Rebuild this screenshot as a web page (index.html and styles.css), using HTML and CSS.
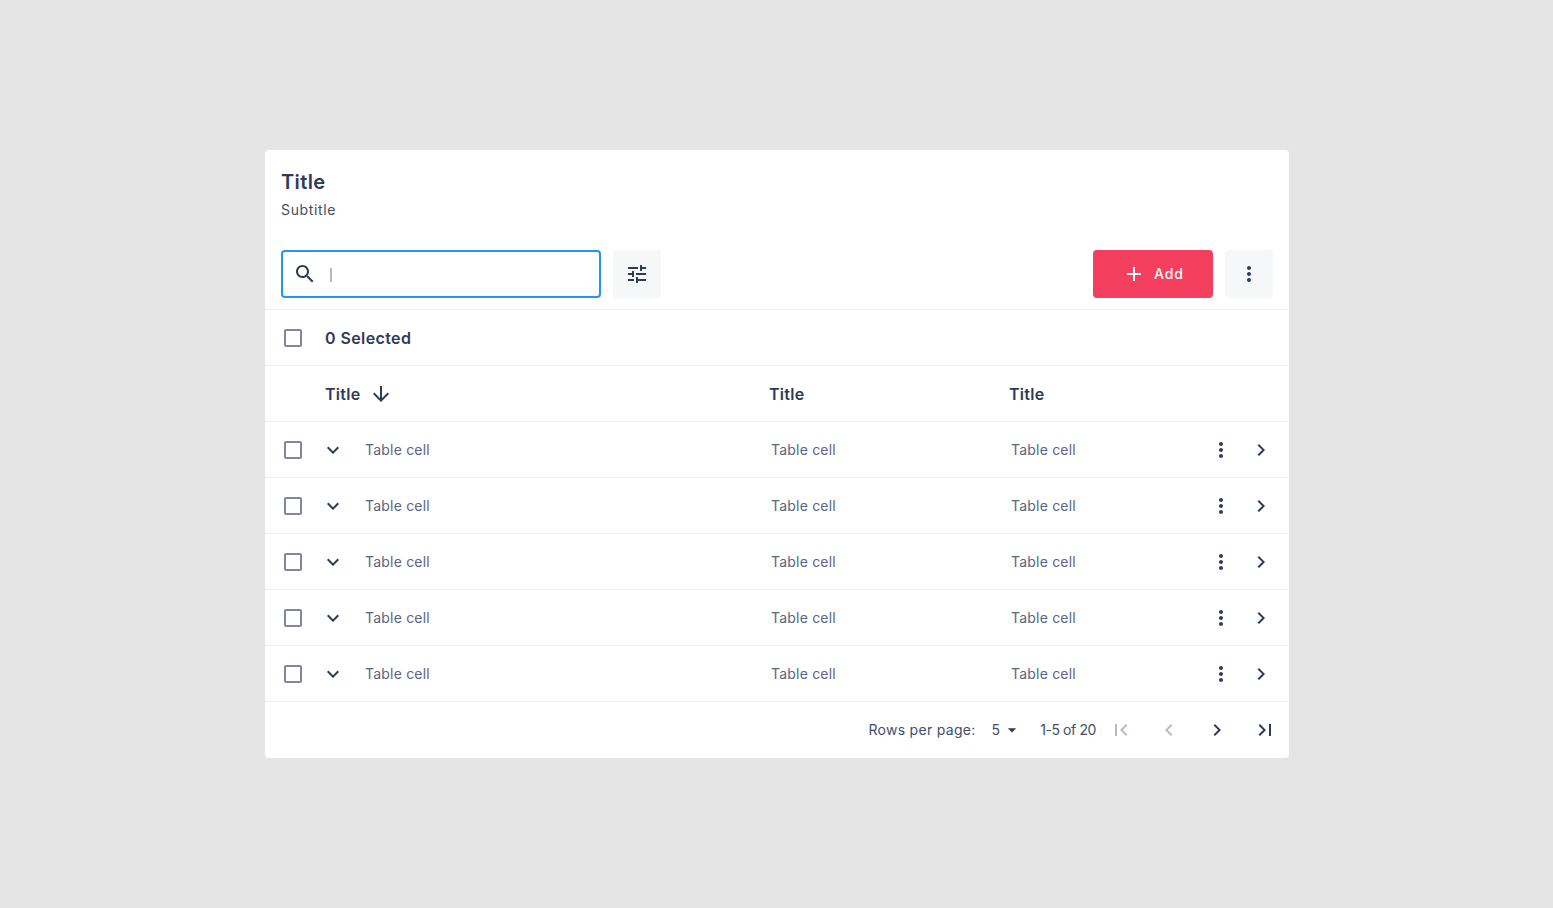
FILE: index.html

```html
<!DOCTYPE html>
<html lang="en">
<head>
    <meta charset="UTF-8">
    <title>Table</title>
    <meta name="viewport" content="width=device-width, initial-scale=1.0">
    <link rel="stylesheet" href="styles.css">
</head>
<body>
    <svg class="sprite" aria-hidden="true">
        <symbol id="i-search" viewBox="0 0 24 24"><path d="M15.5 14h-.79l-.28-.27C15.41 12.59 16 11.11 16 9.5 16 5.91 13.09 3 9.5 3S3 5.91 3 9.5 5.91 16 9.5 16c1.61 0 3.09-.59 4.23-1.57l.27.28v.79l5 4.99L20.49 19l-4.99-5zm-6 0C7.01 14 5 11.99 5 9.5S7.01 5 9.5 5 14 7.01 14 9.5 11.99 14 9.5 14z"/></symbol>
        <symbol id="i-tune" viewBox="0 0 24 24"><path d="M3 17v2h6v-2H3zM3 5v2h10V5H3zm10 16v-2h8v-2h-8v-2h-2v6h2zM7 9v2H3v2h4v2h2V9H7zm14 4v-2H11v2h10zm-6-4h2V7h4V5h-4V3h-2v6z"/></symbol>
        <symbol id="i-more" viewBox="0 0 24 24"><path d="M12 8c1.1 0 2-.9 2-2s-.9-2-2-2-2 .9-2 2 .9 2 2 2zm0 2c-1.1 0-2 .9-2 2s.9 2 2 2 2-.9 2-2-.9-2-2-2zm0 6c-1.1 0-2 .9-2 2s.9 2 2 2 2-.9 2-2-.9-2-2-2z"/></symbol>
        <symbol id="i-add" viewBox="0 0 24 24"><path d="M19 13h-6v6h-2v-6H5v-2h6V5h2v6h6v2z"/></symbol>
        <symbol id="i-down" viewBox="0 0 24 24"><path d="M20 12l-1.41-1.41L13 16.17V4h-2v12.17l-5.58-5.59L4 12l8 8 8-8z"/></symbol>
        <symbol id="i-expand" viewBox="0 0 24 24"><path d="M16.59 8.59L12 13.17 7.41 8.59 6 10l6 6 6-6z"/></symbol>
        <symbol id="i-next" viewBox="0 0 24 24"><path d="M10 6L8.59 7.41 13.17 12l-4.58 4.59L10 18l6-6z"/></symbol>
        <symbol id="i-prev" viewBox="0 0 24 24"><path d="M15.41 7.41L14 6l-6 6 6 6 1.41-1.41L10.83 12z"/></symbol>
        <symbol id="i-first" viewBox="0 0 24 24"><path d="M18.41 16.59L13.82 12l4.59-4.59L17 6l-6 6 6 6zM6 6h2v12H6z"/></symbol>
        <symbol id="i-last" viewBox="0 0 24 24"><path d="M5.59 7.41L10.18 12l-4.59 4.59L7 18l6-6-6-6zM16 6h2v12h-2z"/></symbol>
        <symbol id="i-drop" viewBox="0 0 24 24"><path d="M7 10l5 5 5-5z"/></symbol>
    </svg>

    <div class="card">
        <div class="heading">
            <h2>Title</h2>
            <p>Subtitle</p>
        </div>

        <div class="toolbar">
            <div class="search">
                <svg class="icon"><use href="#i-search"/></svg>
                <span class="caret"></span>
            </div>
            <button class="btn-square"><svg class="icon"><use href="#i-tune"/></svg></button>
            <button class="btn-add"><svg class="icon"><use href="#i-add"/></svg>Add</button>
            <button class="btn-square"><svg class="icon"><use href="#i-more"/></svg></button>
        </div>

        <div class="row-selected">
            <span class="check"></span>
            <strong>0 Selected</strong>
        </div>

        <div class="row-head">
            <div class="head-sort">Title <svg class="icon"><use href="#i-down"/></svg></div>
            <div>Title</div>
            <div>Title</div>
        </div>

        <div class="row">
            <span class="check"></span>
            <svg class="icon"><use href="#i-expand"/></svg>
            <span class="cell">Table cell</span>
            <span class="cell">Table cell</span>
            <span class="cell">Table cell</span>
            <div class="actions">
                <svg class="icon"><use href="#i-more"/></svg>
                <svg class="icon"><use href="#i-next"/></svg>
            </div>
        </div>
        <div class="row">
            <span class="check"></span>
            <svg class="icon"><use href="#i-expand"/></svg>
            <span class="cell">Table cell</span>
            <span class="cell">Table cell</span>
            <span class="cell">Table cell</span>
            <div class="actions">
                <svg class="icon"><use href="#i-more"/></svg>
                <svg class="icon"><use href="#i-next"/></svg>
            </div>
        </div>
        <div class="row">
            <span class="check"></span>
            <svg class="icon"><use href="#i-expand"/></svg>
            <span class="cell">Table cell</span>
            <span class="cell">Table cell</span>
            <span class="cell">Table cell</span>
            <div class="actions">
                <svg class="icon"><use href="#i-more"/></svg>
                <svg class="icon"><use href="#i-next"/></svg>
            </div>
        </div>
        <div class="row">
            <span class="check"></span>
            <svg class="icon"><use href="#i-expand"/></svg>
            <span class="cell">Table cell</span>
            <span class="cell">Table cell</span>
            <span class="cell">Table cell</span>
            <div class="actions">
                <svg class="icon"><use href="#i-more"/></svg>
                <svg class="icon"><use href="#i-next"/></svg>
            </div>
        </div>
        <div class="row">
            <span class="check"></span>
            <svg class="icon"><use href="#i-expand"/></svg>
            <span class="cell">Table cell</span>
            <span class="cell">Table cell</span>
            <span class="cell">Table cell</span>
            <div class="actions">
                <svg class="icon"><use href="#i-more"/></svg>
                <svg class="icon"><use href="#i-next"/></svg>
            </div>
        </div>

        <div class="pager">
            <span class="rows-label">Rows per page:</span>
            <span class="rows-select">5 <svg class="icon"><use href="#i-drop"/></svg></span>
            <span class="range">1-5 of 20</span>
            <div class="pager-nav">
                <svg class="icon off"><use href="#i-first"/></svg>
                <svg class="icon off"><use href="#i-prev"/></svg>
                <svg class="icon"><use href="#i-next"/></svg>
                <svg class="icon"><use href="#i-last"/></svg>
            </div>
        </div>
    </div>
</body>
</html>
```

FILE: styles.css

```css
* {
    box-sizing: border-box;
}
body {
    margin: 0;
    min-height: 908px;
    padding: 150px 264px 150px 265px;
    background-color: #e5e5e5;
    font-family: Inter, "Open Sans", sans-serif;
    color: #2e3a59;
}
.sprite {
    display: none;
}
.icon {
    width: 24px;
    height: 24px;
    fill: #2e3a59;
    flex: none;
}
.card {
    width: 1024px;
    background-color: #fff;
    border-radius: 4px;
}
.heading {
    height: 100px;
    padding: 20px 16px 0;
}
.heading h2 {
    margin: 0;
    font-size: 20px;
    line-height: 24px;
    font-weight: 600;
    letter-spacing: 0.4px;
}
.heading p {
    margin: 8px 0 0;
    font-size: 14px;
    line-height: 16px;
    letter-spacing: 0.65px;
    color: #444e6b;
}
.toolbar {
    display: flex;
    align-items: center;
    height: 60px;
    padding: 0 16px 12px;
    border-bottom: 1px solid #edeff2;
}
.search {
    display: flex;
    align-items: center;
    gap: 13px;
    width: 320px;
    height: 48px;
    padding: 0 10px;
    margin-right: 12px;
    border: 2px solid #2196f3;
    border-radius: 4px;
}
.caret {
    width: 2px;
    height: 14px;
    margin-top: 2px;
    background-color: #b4b9c6;
}
.btn-square {
    display: flex;
    align-items: center;
    justify-content: center;
    width: 48px;
    height: 48px;
    padding: 0;
    border: 0;
    border-radius: 4px;
    background-color: #f6f7f9;
}
.btn-add {
    display: flex;
    align-items: center;
    justify-content: center;
    gap: 8px;
    width: 120px;
    height: 48px;
    margin-left: auto;
    margin-right: 12px;
    padding: 0;
    border: 0;
    border-radius: 4px;
    background-color: #f43f5e;
    color: #fff;
    font-family: inherit;
    font-size: 14px;
    font-weight: 500;
    letter-spacing: 0.9px;
}
.btn-add .icon {
    fill: #fff;
}
.check {
    display: block;
    width: 18px;
    height: 18px;
    margin-left: 19px;
    border: 2px solid #7f879f;
    border-radius: 2px;
}
.row-selected {
    display: grid;
    grid-template-columns: 60px 1fr;
    align-items: center;
    height: 56px;
    border-bottom: 1px solid #edeff2;
    font-size: 16px;
}
.row-selected strong {
    font-weight: 600;
    letter-spacing: 0.4px;
}
.row-head {
    display: grid;
    grid-template-columns: 444px 240px 1fr;
    align-items: center;
    height: 56px;
    padding-left: 60px;
    border-bottom: 1px solid #edeff2;
    font-size: 16px;
    font-weight: 600;
    letter-spacing: 0.3px;
}
.head-sort {
    display: flex;
    align-items: center;
    gap: 8px;
}
.row {
    display: grid;
    grid-template-columns: 60px 40px 406px 240px 100px 1fr;
    align-items: center;
    height: 56px;
    border-bottom: 1px solid #edeff2;
}
.row > .icon {
    margin-left: -4px;
}
.cell {
    font-size: 14px;
    letter-spacing: 0.2px;
    color: #5c6580;
}
.actions {
    display: flex;
    grid-column: 6;
    justify-content: flex-end;
    gap: 16px;
    padding-right: 16px;
}
.pager {
    display: flex;
    align-items: center;
    height: 56px;
    padding-right: 12px;
    justify-content: flex-end;
    font-size: 14px;
    color: #444e6b;
}
.rows-label {
    margin-right: 16px;
    margin-bottom: 2px;
    letter-spacing: 0.3px;
}
.rows-select {
    display: flex;
    align-items: center;
    margin-right: 18px;
    margin-bottom: 2px;
}
.rows-select .icon {
    width: 20px;
    height: 20px;
    margin-left: 2px;
    margin-top: 2px;
}
.range {
    margin-right: 13px;
    margin-bottom: 2px;
    letter-spacing: -0.4px;
}
.pager-nav {
    display: flex;
    gap: 24px;
}
.icon.off {
    fill: #b5bac6;
}
```
